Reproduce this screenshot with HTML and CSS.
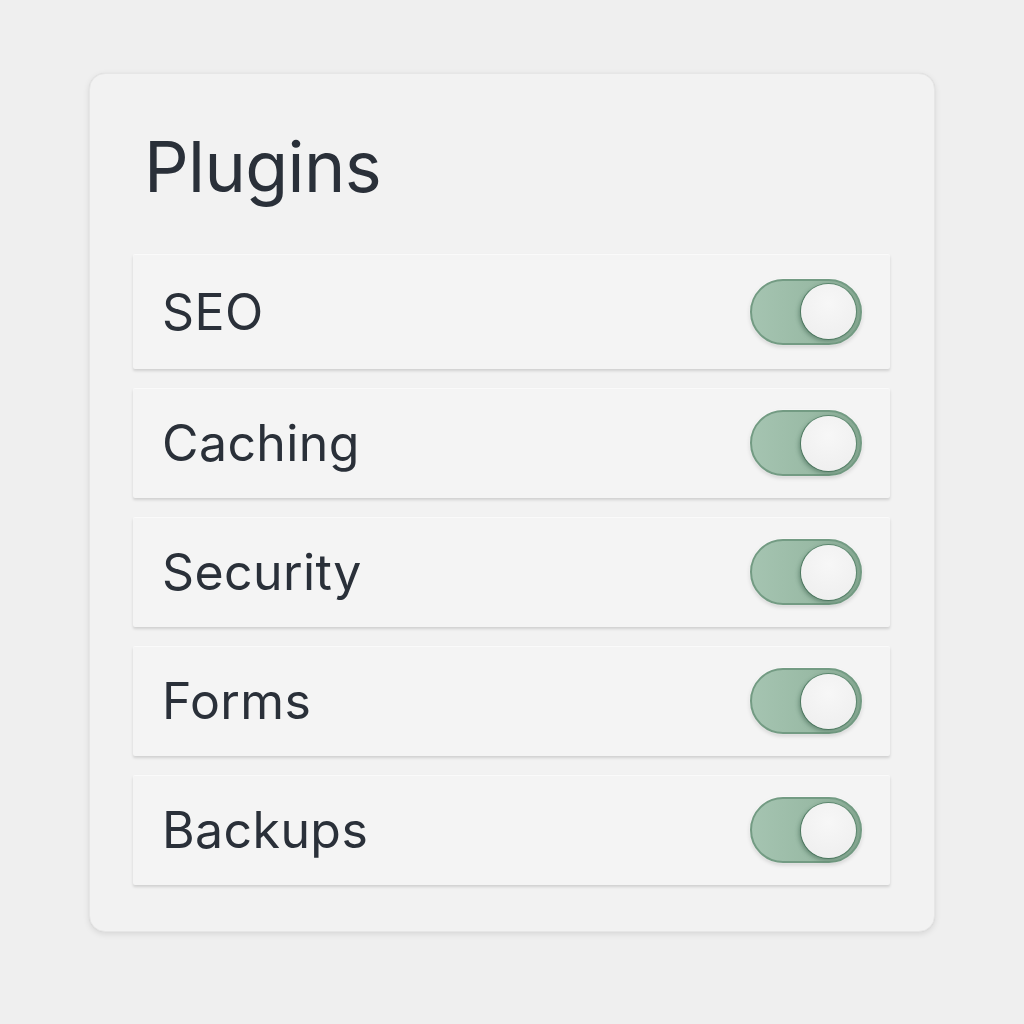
FILE: index.html
```html
<!DOCTYPE html>
<html>
<head>
<meta charset="utf-8">
<link rel="stylesheet" href="styles.css">
</head>
<body>
<div class="card">
  <h1 class="title">Plugins</h1>
  <div class="list">
    <div class="row first"><span class="label">SEO</span><span class="toggle"><span class="knob"></span></span></div>
    <div class="row"><span class="label">Caching</span><span class="toggle"><span class="knob"></span></span></div>
    <div class="row"><span class="label">Security</span><span class="toggle"><span class="knob"></span></span></div>
    <div class="row"><span class="label">Forms</span><span class="toggle"><span class="knob"></span></span></div>
    <div class="row"><span class="label">Backups</span><span class="toggle"><span class="knob"></span></span></div>
  </div>
</div>
</body>
</html>
```

FILE: styles.css
```css
html, body {
  margin: 0;
  padding: 0;
}
body {
  width: 1024px;
  height: 1024px;
  background: #efefef;
  font-family: Inter, "Noto Sans", sans-serif;
  color: #2a3039;
  padding-top: 73px;
  padding-left: 89px;
  box-sizing: border-box;
}
.card {
  width: 846px;
  height: 859px;
  box-sizing: border-box;
  background: #f2f2f2;
  border-radius: 16px;
  border: 1px solid #e6e6e6;
  box-shadow: 0 2px 6px rgba(0,0,0,0.10), 0 0 1px rgba(0,0,0,0.08);
  padding: 0 44px 0 43px;
}
.title {
  margin: 0;
  padding-left: 11px;
  height: 180px;
  line-height: 186px;
  font-size: 70px;
  font-weight: 400;
  letter-spacing: -0.6px;
}
.list {
  display: flex;
  flex-direction: column;
  gap: 19px;
}
.row {
  height: 110px;
  background: #f4f4f4;
  display: flex;
  align-items: center;
  justify-content: space-between;
  padding: 0 28px 0 29px;
  box-shadow: 0 2px 3px rgba(0,0,0,0.14), inset 0 1px 0 #fafafa;
  border-radius: 2px;
}
.row.first {
  height: 115px;
}
.label {
  font-size: 50px;
  letter-spacing: 0.4px;
}
.toggle {
  width: 112px;
  height: 66px;
  box-sizing: border-box;
  border-radius: 33px;
  background: linear-gradient(90deg, #a5c4b1 0%, #99baa5 55%, #84a690 100%);
  border: 2px solid #739b83;
  box-shadow: 0 2px 4px rgba(0,0,0,0.15), 0 0 0 1px #fbfbfb;
  display: flex;
  align-items: center;
  justify-content: flex-end;
  padding-right: 4px;
}
.knob {
  width: 55px;
  height: 55px;
  border-radius: 50%;
  background: radial-gradient(circle at 50% 35%, #f7f7f7 0%, #efefef 80%, #e2e2e2 100%);
  box-shadow: -2px 2px 4px rgba(40,80,60,0.45), 0 0 0 1px #5f8a71;
}
```
